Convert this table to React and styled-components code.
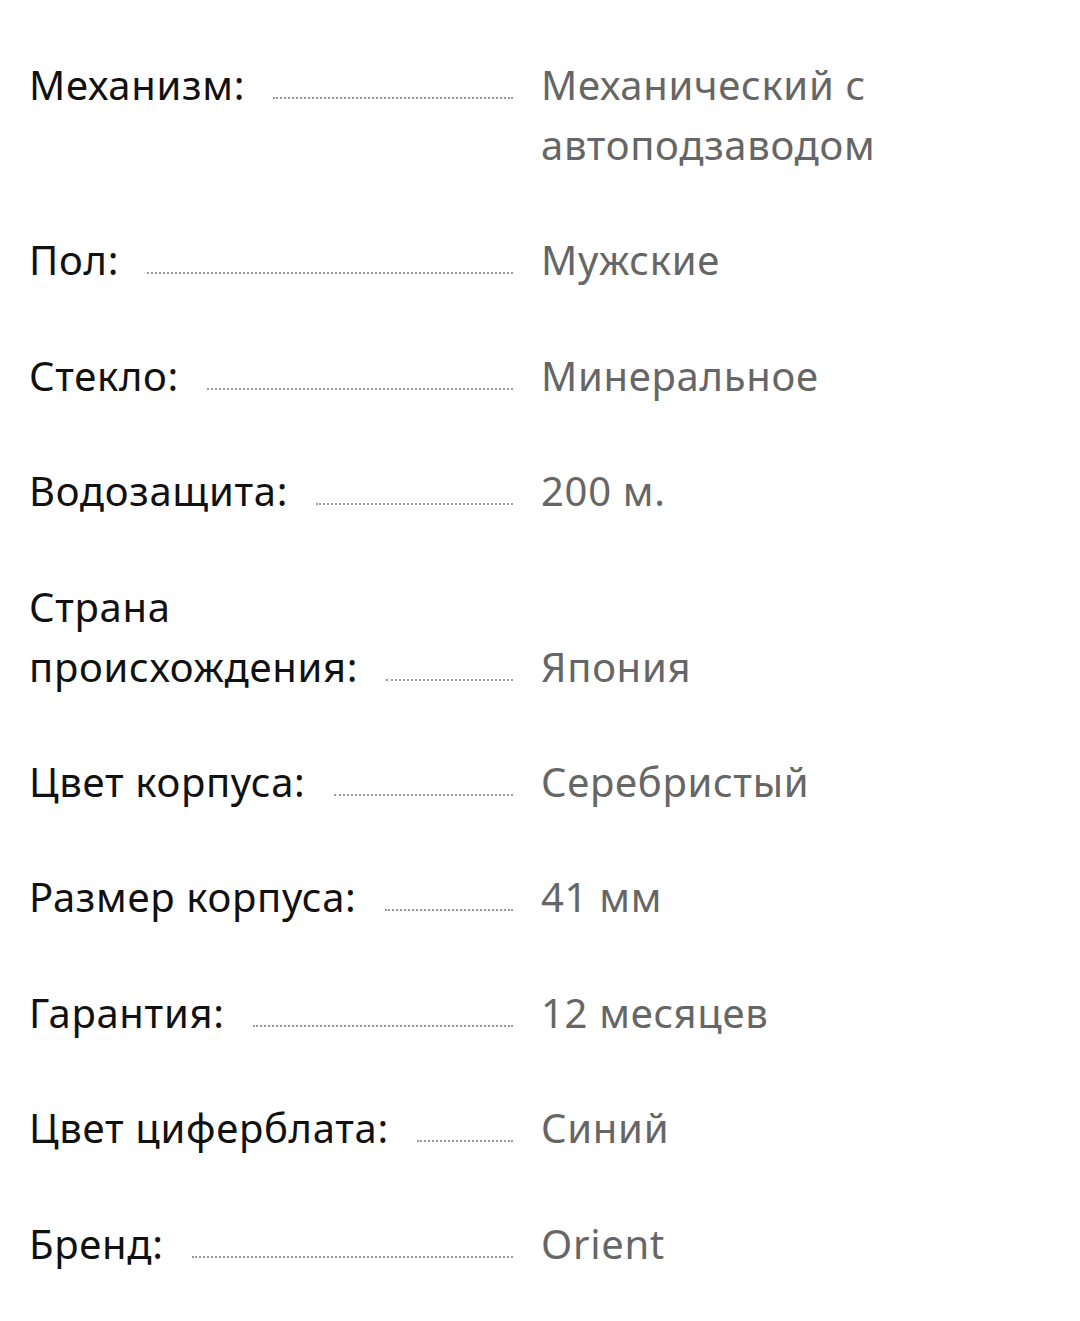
import styled, { createGlobalStyle } from "styled-components";

const GlobalStyle = createGlobalStyle`
    body {
        margin: 0;
        background: #fff;
        font-family: "Noto Sans", "DejaVu Sans", sans-serif;
    }
`;

const List = styled.div`
    padding: 55px 29px 0;
    display: flex;
    flex-direction: column;
    gap: 55.4px;
`;

const Row = styled.div`
    display: grid;
    grid-template-columns: 484px 1fr;
    align-items: ${(p) => (p.$top ? "start" : "end")};
    gap: 28px;
    font-size: 40px;
    line-height: 60px;
    letter-spacing: 0.7px;
`;

const Label = styled.div`
    display: flex;
    align-items: flex-end;
    color: #111;
`;

const LabelText = styled.span`
    white-space: pre-line;
`;

const Dots = styled.span`
    flex: 1;
    min-width: 20px;
    margin: 0 0 16px 28px;
    border-bottom: 2px dotted #9a9a9a;
`;

const Value = styled.div`
    color: #666;
`;

const specs = [
    ["Механизм:", "Механический с автоподзаводом"],
    ["Пол:", "Мужские"],
    ["Стекло:", "Минеральное"],
    ["Водозащита:", "200 м."],
    ["Страна\nпроисхождения:", "Япония"],
    ["Цвет корпуса:", "Серебристый"],
    ["Размер корпуса:", "41 мм"],
    ["Гарантия:", "12 месяцев"],
    ["Цвет циферблата:", "Синий"],
    ["Бренд:", "Orient"],
];

export default function App() {
    return (
        <>
            <GlobalStyle />
            <List>
                {specs.map(([name, value], i) => (
                    <Row key={name} $top={i === 0}>
                        <Label>
                            <LabelText>{name}</LabelText>
                            <Dots />
                        </Label>
                        <Value>{value}</Value>
                    </Row>
                ))}
            </List>
        </>
    );
}
